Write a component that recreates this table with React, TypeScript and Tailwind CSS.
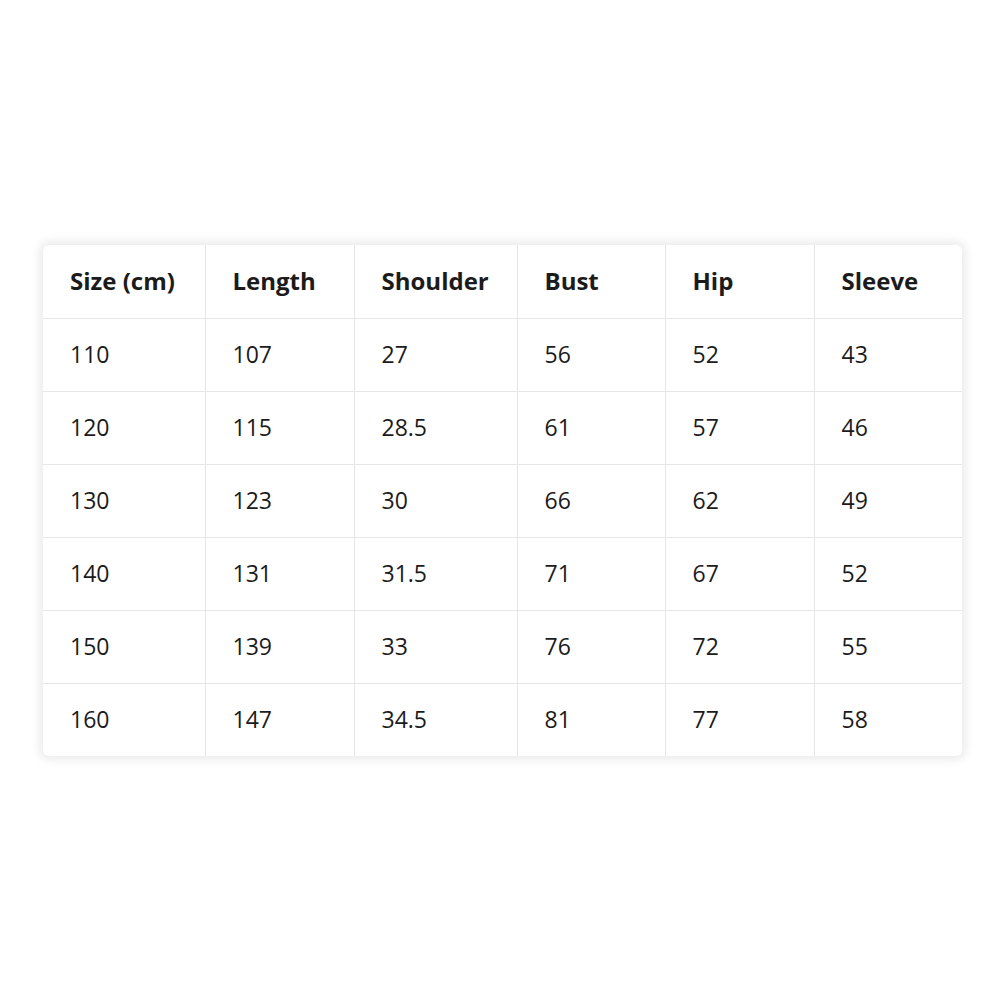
import React from "react";

const headers = ["Size (cm)", "Length", "Shoulder", "Bust", "Hip", "Sleeve"];
const rows = [
  ["110", "107", "27", "56", "52", "43"],
  ["120", "115", "28.5", "61", "57", "46"],
  ["130", "123", "30", "66", "62", "49"],
  ["140", "131", "31.5", "71", "67", "52"],
  ["150", "139", "33", "76", "72", "55"],
  ["160", "147", "34.5", "81", "77", "58"],
];
const widths = ["w-[162px]", "w-[149px]", "w-[163px]", "w-[148px]", "w-[149px]", "w-[148px]"];

export default function App() {
  return (
    <div className="w-[1000px] h-[1000px] bg-white pl-[43px] pt-[245px]" style={{ fontFamily: '"Open Sans", "Noto Sans", sans-serif' }}>
      <div className="w-[919px] rounded-md bg-white shadow-[0_0_10px_4px_rgba(0,0,0,0.08)] overflow-hidden">
        <table className="w-full border-collapse table-fixed text-[#1b1b1b]">
          <colgroup>
            {widths.map((w, i) => (
              <col key={i} className={w} />
            ))}
          </colgroup>
          <thead>
            <tr className="h-[73px]">
              {headers.map((h, i) => (
                <th
                  key={h}
                  className={`text-left font-bold text-[24px] leading-none pl-[27px] border-b border-[#e6e6e6] ${i > 0 ? "border-l" : ""}`}
                >
                  {h}
                </th>
              ))}
            </tr>
          </thead>
          <tbody>
            {rows.map((r, ri) => (
              <tr key={ri} className="h-[73px]">
                {r.map((c, ci) => (
                  <td
                    key={ci}
                    className={`text-left text-[23px] leading-none pl-[27px] border-[#e6e6e6] ${ci > 0 ? "border-l" : ""} ${ri < rows.length - 1 ? "border-b" : ""}`}
                  >
                    {c}
                  </td>
                ))}
              </tr>
            ))}
          </tbody>
        </table>
      </div>
    </div>
  );
}
